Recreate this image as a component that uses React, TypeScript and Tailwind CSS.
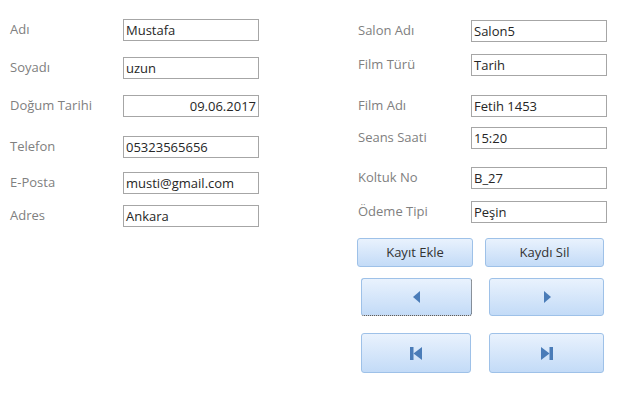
import React from "react";

function Field({ label, value, top, right }: { label: string; value: string; top: string; right?: boolean }) {
    return (
        <div className={`flex items-center ${top}`}>
            <div className="w-[113px] text-[13px] text-[#808080] leading-none -mt-[2px]">{label}</div>
            <div className={`w-[136px] h-[22px] border border-[#a6a6a6] bg-white px-[2px] flex items-center text-[13px] text-[#262626] leading-none ${right ? "justify-end" : ""}`}>
                {value}
            </div>
        </div>
    );
}

function Btn({ children, cls }: { children: React.ReactNode; cls: string }) {
    return (
        <div className={`flex items-center justify-center rounded-[3px] border border-[#9ec1e8] bg-gradient-to-b from-[#e9f2fd] to-[#c3dbf7] text-[13px] text-[#333] ${cls}`}>
            {children}
        </div>
    );
}

const tri = "#4a7cb8";

export default function App() {
    return (
        <div className="w-[626px] h-[404px] bg-white relative flex font-['Open_Sans','Lato',sans-serif]">
            {/* left column */}
            <div className="flex flex-col pl-[10px] pt-[19px] w-[358px]">
                <Field label="Adı" value="Mustafa" top="" />
                <Field label="Soyadı" value="uzun" top="mt-[16px]" />
                <Field label="Doğum Tarihi" value="09.06.2017" top="mt-[16px]" right />
                <Field label="Telefon" value="05323565656" top="mt-[19px]" />
                <Field label="E-Posta" value="musti@gmail.com" top="mt-[14px]" />
                <Field label="Adres" value="Ankara" top="mt-[11px]" />
            </div>

            {/* right column */}
            <div className="flex flex-col pt-[20px]">
                <Field label="Salon Adı" value="Salon5" top="" />
                <Field label="Film Türü" value="Tarih" top="mt-[12px]" />
                <Field label="Film Adı" value="Fetih 1453" top="mt-[19px]" />
                <Field label="Seans Saati" value="15:20" top="mt-[10px]" />
                <Field label="Koltuk No" value="B_27" top="mt-[18px]" />
                <Field label="Ödeme Tipi" value="Peşin" top="mt-[12px]" />

                <div className="flex mt-[15px] -ml-[1px]">
                    <Btn cls="w-[116px] h-[29px]">Kayıt Ekle</Btn>
                    <Btn cls="w-[119px] h-[29px] ml-[12px]">Kaydı Sil</Btn>
                </div>
                <div className="flex mt-[11px] ml-[3px]">
                    <Btn cls="w-[111px] h-[38px] [border-right-style:dotted] [border-bottom-style:dotted] border-r-[#3a3a3a] border-b-[#3a3a3a]">
                        <svg width="8" height="12" viewBox="0 0 8 12"><path d="M7 0 L7 12 L0 6 Z" fill={tri} /></svg>
                    </Btn>
                    <Btn cls="w-[115px] h-[38px] ml-[17px]">
                        <svg width="8" height="12" viewBox="0 0 8 12"><path d="M1 0 L1 12 L8 6 Z" fill={tri} /></svg>
                    </Btn>
                </div>
                <div className="flex mt-[17px] ml-[3px]">
                    <Btn cls="w-[110px] h-[40px]">
                        <svg width="12" height="13" viewBox="0 0 12 13"><rect x="0" y="0" width="3.5" height="13" fill={tri} /><path d="M12 0 L12 13 L3.5 6.5 Z" fill={tri} /></svg>
                    </Btn>
                    <Btn cls="w-[115px] h-[40px] ml-[18px]">
                        <svg width="12" height="13" viewBox="0 0 12 13"><path d="M0 0 L0 13 L8.5 6.5 Z" fill={tri} /><rect x="8.5" y="0" width="3.5" height="13" fill={tri} /></svg>
                    </Btn>
                </div>
            </div>
        </div>
    );
}
